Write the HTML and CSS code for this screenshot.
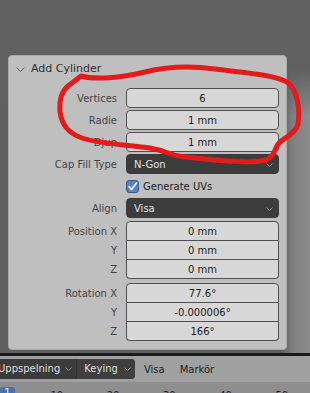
FILE: index.html
```html
<!DOCTYPE html>
<html lang="sv">
<head>
    <meta charset="UTF-8">
    <title>Add Cylinder</title>
    <meta name="viewport" content="width=device-width, initial-scale=1.0">
    <link rel="stylesheet" href="styles.css">
</head>
<body>

    <div class="viewport">
        <div class="panel">
            <div class="panel-header">
                <svg class="caret" width="9" height="6" viewBox="0 0 9 6"><polyline points="0.5,0.5 4.5,4.5 8.5,0.5" /></svg>
                <span>Add Cylinder</span>
            </div>

            <div class="props">
                <div class="prop"><span class="label">Vertices</span><div class="field">6</div></div>
                <div class="prop"><span class="label">Radie</span><div class="field">1 mm</div></div>
                <div class="prop"><span class="label">Djup</span><div class="field">1 mm</div></div>
                <div class="prop">
                    <span class="label">Cap Fill Type</span>
                    <div class="field dark">N-Gon<svg class="drop" width="7" height="4" viewBox="0 0 7 4"><polyline points="0.5,0.5 3.5,3.5 6.5,0.5" /></svg></div>
                </div>
                <div class="prop">
                    <span></span>
                    <label class="check">
                        <span class="box"><svg width="11" height="11" viewBox="0 0 11 11"><polyline points="2,5.5 4.5,8.5 9.5,2" /></svg></span>
                        Generate UVs
                    </label>
                </div>
                <div class="prop">
                    <span class="label">Align</span>
                    <div class="field dark">Visa<svg class="drop" width="7" height="4" viewBox="0 0 7 4"><polyline points="0.5,0.5 3.5,3.5 6.5,0.5" /></svg></div>
                </div>

                <div class="group first-group">
                    <div class="prop"><span class="label">Position X</span><div class="field cell">0 mm</div></div>
                    <div class="prop"><span class="label">Y</span><div class="field cell">0 mm</div></div>
                    <div class="prop"><span class="label">Z</span><div class="field cell">0 mm</div></div>
                </div>

                <div class="group">
                    <div class="prop"><span class="label">Rotation X</span><div class="field cell">77.6°</div></div>
                    <div class="prop"><span class="label">Y</span><div class="field cell">-0.000006°</div></div>
                    <div class="prop"><span class="label">Z</span><div class="field cell">166°</div></div>
                </div>
            </div>
        </div>
    </div>

    <div class="divider"></div>

    <div class="header-bar">
        <div class="menu-pair">
            <span class="menu">Uppspelning<svg class="drop" width="7" height="4" viewBox="0 0 7 4"><polyline points="0.5,0.5 3.5,3.5 6.5,0.5" /></svg></span>
            <span class="menu">Keying<svg class="drop" width="7" height="4" viewBox="0 0 7 4"><polyline points="0.5,0.5 3.5,3.5 6.5,0.5" /></svg></span>
        </div>
        <span class="plain">Visa</span>
        <span class="plain">Markör</span>
    </div>

    <div class="ruler">
        <span class="frame">1</span>
        <span class="tick first">10</span>
        <span class="tick">20</span>
        <span class="tick">30</span>
        <span class="tick">40</span>
        <span class="tick">50</span>
    </div>

    <!-- red marker scribble drawn over the screenshot -->
    <svg class="scribble" width="310" height="393" viewBox="0 0 310 393">
        <path d="M 81 76 C 95 80, 120 78, 145 72 C 165 67, 185 65, 215 69 C 245 73, 270 74, 287 82 C 298 90, 300 110, 298 124 C 296 133, 286 137, 280 142 C 274 147, 276 156, 266 160 C 250 164, 215 160, 185 157 C 170 156, 168 151, 150 148 C 130 145, 100 144, 82 138 C 68 133, 62 125, 60 112 C 59 100, 62 91, 68 86 C 72 83, 76 80, 81 76 Z" />
    </svg>

</body>
</html>
```

FILE: styles.css
```css
body {
    margin: 0;
    width: 310px;
    height: 393px;
    overflow: hidden;
    position: relative;
    font-family: 'DejaVu Sans', 'Noto Sans', sans-serif;
    font-size: 10px;
    background: #626262;
}
.viewport {
    box-sizing: border-box;
    height: 353px;
    padding: 55px 0 0 8px;
    background:
        linear-gradient(to bottom, #616161 70px, rgba(97,97,97,0) 115px),
        linear-gradient(to right, #5f5f5f 282px, #7e7e7e 292px, #8c8c8c 310px);
}
.panel {
    width: 279px;
    box-sizing: border-box;
    background-color: #bfbfbf;
    border: 1px solid #a9a9a9;
    border-radius: 4px;
    padding: 0 7px 8px 0;
}
.panel-header {
    height: 25px;
    display: flex;
    align-items: center;
    font-size: 11px;
    color: #2e2e2e;
}
.caret {
    margin: 2px 6px 0 7px;
    fill: none;
    stroke: #5a5a5a;
    stroke-width: 1;
}
.props {
    display: flex;
    flex-direction: column;
    gap: 2px;
    padding-top: 7px;
}
.prop {
    display: grid;
    grid-template-columns: 108px 153px;
    column-gap: 9px;
    height: 20px;
    align-items: center;
}
.label {
    text-align: right;
    color: #444;
    white-space: nowrap;
}
.field {
    box-sizing: border-box;
    height: 20px;
    display: flex;
    align-items: center;
    justify-content: center;
    background-color: #d7d7d7;
    border: 1px solid #4f4f4f;
    border-radius: 4px;
    color: #1c1c1c;
}
.field.dark {
    justify-content: flex-start;
    padding-left: 7px;
    background-color: #3c3c3c;
    border-color: #3c3c3c;
    color: #e2e2e2;
    position: relative;
}
.drop {
    fill: none;
    stroke: #8e8e8e;
    stroke-width: 1;
}
.field.dark .drop {
    position: absolute;
    right: 5px;
    top: 8px;
}
.check {
    display: flex;
    align-items: center;
    gap: 4px;
    color: #1c1c1c;
    margin-top: 1px;
}
.box {
    box-sizing: border-box;
    width: 13px;
    height: 13px;
    display: flex;
    align-items: center;
    justify-content: center;
    background-color: #5681c4;
    border: 1px solid #34598f;
    border-radius: 3px;
}
.box polyline {
    fill: none;
    stroke: #ffffff;
    stroke-width: 1.6;
    stroke-linecap: round;
    stroke-linejoin: round;
}

/* joined number fields */
.group {
    display: flex;
    flex-direction: column;
    margin-top: 2px;
}
.first-group {
    margin-top: 1px;
}
.group .prop {
    height: 19px;
}
.group .prop:first-child {
    height: 20px;
}
.field.cell {
    height: 19px;
    border-top: none;
    border-radius: 0;
}
.group .prop:first-child .field.cell {
    height: 20px;
    border-top: 1px solid #4f4f4f;
    border-radius: 4px 4px 0 0;
}
.group .prop:last-child .field.cell {
    border-radius: 0 0 4px 4px;
}

/* timeline header */
.divider {
    height: 3px;
    background-color: #1a1a1a;
}
.header-bar {
    height: 26px;
    display: flex;
    align-items: center;
    background-color: #a0a0a0;
    color: #1e1e1e;
}
.menu-pair {
    display: flex;
    height: 20px;
    margin-left: -8px;
    margin-top: -1px;
    background-color: #3b3b3b;
    border-radius: 0 4px 4px 0;
    color: #dedede;
}
.menu {
    display: flex;
    align-items: center;
    gap: 5px;
    padding: 0 4px 0 6px;
}
.menu + .menu {
    border-left: 1px solid #333;
    background-color: #3f3f3f;
    border-radius: 0 4px 4px 0;
    gap: 6px;
    padding-left: 7px;
}
.plain {
    margin-left: 9px;
    margin-right: 6px;
}
.ruler {
    height: 11px;
    overflow: hidden;
    display: flex;
    align-items: flex-start;
    background-color: #8e8e8e;
    color: #1e1e1e;
    padding-top: 5px;
    line-height: 12px;
}
.frame {
    width: 16px;
    height: 14px;
    text-align: center;
    background-color: #4772b3;
    color: #f0f0f0;
    border-radius: 3px;
}
.tick {
    width: 61px;
    text-align: center;
    padding-top: 3px;
}
.tick.first {
    margin-left: 14px;
}
.scribble {
    position: absolute;
    left: 0;
    top: 0;
    pointer-events: none;
}
.scribble path {
    fill: none;
    stroke: #e41b1b;
    stroke-width: 5;
    stroke-linecap: round;
    stroke-linejoin: round;
}
```
